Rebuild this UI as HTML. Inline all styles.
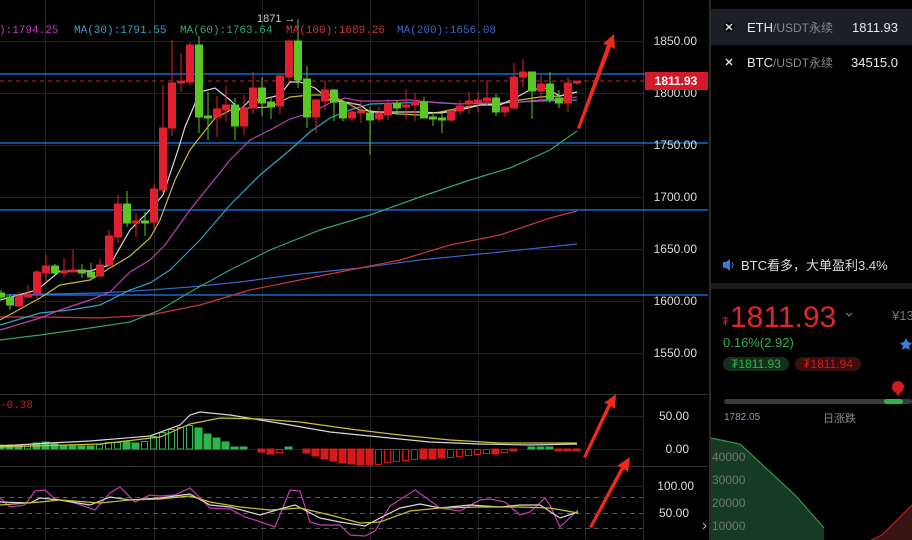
<!DOCTYPE html>
<html><head><meta charset="utf-8"><style>
html,body{margin:0;padding:0;background:#000;width:912px;height:540px;overflow:hidden}
svg{display:block}
.m{font-family:"Liberation Mono",monospace;font-size:11px}
.s{font-family:"Liberation Sans","Noto Sans CJK SC",sans-serif}
</style></head><body>
<svg width="912" height="540" xmlns="http://www.w3.org/2000/svg">
<rect width="912" height="540" fill="#000"/>
<!-- grid -->
<g stroke="#222" stroke-width="1">
<line x1="45.5" y1="0" x2="45.5" y2="540"/><line x1="154.5" y1="0" x2="154.5" y2="540"/><line x1="262.5" y1="0" x2="262.5" y2="540"/><line x1="370.5" y1="0" x2="370.5" y2="540"/><line x1="478.5" y1="0" x2="478.5" y2="540"/><line x1="585.5" y1="0" x2="585.5" y2="540"/>
<line x1="0" y1="41.5" x2="643" y2="41.5"/><line x1="0" y1="93.5" x2="643" y2="93.5"/><line x1="0" y1="145.5" x2="643" y2="145.5"/><line x1="0" y1="197.5" x2="643" y2="197.5"/><line x1="0" y1="249.5" x2="643" y2="249.5"/><line x1="0" y1="301.5" x2="643" y2="301.5"/><line x1="0" y1="353.5" x2="643" y2="353.5"/>
<line x1="0" y1="416.5" x2="643" y2="416.5"/><line x1="0" y1="449.5" x2="643" y2="449.5"/><line x1="0" y1="486.5" x2="643" y2="486.5"/>
</g>
<line x1="643.5" y1="0" x2="643.5" y2="540" stroke="#2a2a2a"/>
<line x1="0" y1="394.5" x2="708" y2="394.5" stroke="#333"/>
<line x1="0" y1="466.5" x2="708" y2="466.5" stroke="#333"/>
<!-- blue lines -->
<g stroke="#1e7bf0" stroke-width="1.3">
<line x1="0" y1="74" x2="708" y2="74"/><line x1="0" y1="143" x2="708" y2="143"/><line x1="0" y1="210" x2="708" y2="210"/><line x1="0" y1="295" x2="708" y2="295"/>
</g>
<line x1="0" y1="81" x2="645" y2="81" stroke="#d21f2a" stroke-dasharray="4,4"/>
<!-- MAs -->
<g fill="none" stroke-width="1.2">
<polyline stroke="#3a63c9" points="0,295 100,293 150,290 190,287 240,282 300,274 360,268 420,260 500,252 577,244"/>
<polyline stroke="#c8383a" points="0,317 45,317 100,318 150,315 200,305 250,290 300,280 350,270 400,260 450,245 500,235 550,218 577,211"/>
<polyline stroke="#2fa86a" points="0,340 40,335 90,328 130,322 160,310 190,292 230,270 270,250 320,230 370,215 420,197 470,180 510,168 550,150 577,131"/>
<polyline stroke="#2aa6c4" points="0,325 40,313 70,310 100,305 130,290 150,283 170,270 200,240 230,205 260,175 290,150 310,132 330,118 350,110 370,104 400,103 430,102 460,104 500,103 540,101 577,100"/>
<polyline stroke="#c23db5" points="0,330 40,318 60,310 90,300 110,292 130,272 150,260 165,245 190,210 210,185 230,160 250,140 270,130 290,119 310,113 330,103 345,98 360,101 380,101 410,100 440,103 460,104 480,103 500,103 520,102 540,100 560,99 577,97"/>
<polyline stroke="#c9b832" points="0,320 40,298 60,285 90,280 110,268 130,256 150,238 160,220 175,180 190,150 200,137 215,118 235,108 250,108 270,107 290,97 310,95 330,95 345,102 360,110 380,112 400,114 420,115 440,112 460,108 480,105 500,104 520,100 540,97 560,96 577,92"/>
<polyline stroke="#d8d8d8" points="0,300 37,290 60,271 90,271 110,265 130,230 150,210 163,195 178,150 185,127 200,92 215,88 230,100 240,110 250,100 260,100 280,95 290,82 300,82 315,88 330,100 345,102 360,105 370,112 380,112 400,112 420,112 440,113 460,110 480,105 500,105 515,98 530,90 545,88 560,96 577,92"/>
</g>
<!-- candles -->
<g stroke-width="1">
<g stroke="#5ac724" fill="#5ac724">
<line x1="1" y1="290" x2="1" y2="300"/><rect x="-2.5" y="293" width="7" height="4"/>
<line x1="10" y1="294" x2="10" y2="310"/><rect x="6.5" y="297" width="7" height="8"/>
<line x1="55" y1="264" x2="55" y2="275"/><rect x="51.5" y="266" width="7" height="7"/>
<line x1="82" y1="264" x2="82" y2="278"/><rect x="78.5" y="270" width="7" height="3"/>
<line x1="91" y1="263" x2="91" y2="280"/><rect x="87.5" y="272" width="7" height="5"/>
<line x1="127" y1="191" x2="127" y2="227"/><rect x="123.5" y="204" width="7" height="19"/>
<line x1="145" y1="212" x2="145" y2="236"/><rect x="141.5" y="221" width="7" height="2"/>
<line x1="199" y1="36" x2="199" y2="133"/><rect x="195.5" y="45" width="7" height="72"/>
<line x1="208" y1="92" x2="208" y2="140"/><rect x="204.5" y="116" width="7" height="2"/>
<line x1="235" y1="98" x2="235" y2="140"/><rect x="231.5" y="105" width="7" height="21"/>
<line x1="262" y1="77" x2="262" y2="116"/><rect x="258.5" y="88" width="7" height="15"/>
<line x1="271" y1="97" x2="271" y2="119"/><rect x="267.5" y="102" width="7" height="5"/>
<line x1="298" y1="19" x2="298" y2="88"/><rect x="294.5" y="41" width="7" height="39"/>
<line x1="307" y1="66" x2="307" y2="128"/><rect x="303.5" y="79" width="7" height="38"/>
<line x1="334" y1="89" x2="334" y2="121"/><rect x="330.5" y="90" width="7" height="12"/>
<line x1="343" y1="102" x2="343" y2="121"/><rect x="339.5" y="102" width="7" height="16"/>
<line x1="370" y1="107" x2="370" y2="155"/><rect x="366.5" y="113" width="7" height="7"/>
<line x1="397" y1="100" x2="397" y2="115"/><rect x="393.5" y="103" width="7" height="5"/>
<line x1="424" y1="97" x2="424" y2="118"/><rect x="420.5" y="102" width="7" height="16"/>
<line x1="433" y1="112" x2="433" y2="126"/><rect x="429.5" y="117" width="7" height="2"/>
<line x1="442" y1="113" x2="442" y2="133"/><rect x="438.5" y="118" width="7" height="2"/>
<line x1="496" y1="94" x2="496" y2="116"/><rect x="492.5" y="98" width="7" height="14"/>
<line x1="532" y1="72" x2="532" y2="119"/><rect x="528.5" y="72" width="7" height="19"/>
<line x1="550" y1="72" x2="550" y2="103"/><rect x="546.5" y="84" width="7" height="15"/>
<line x1="559" y1="90" x2="559" y2="108"/><rect x="555.5" y="98" width="7" height="5"/>
</g>
<g stroke="#e0202e" fill="#e0202e">
<line x1="19" y1="292" x2="19" y2="307"/><rect x="15.5" y="296" width="7" height="10"/>
<line x1="28" y1="285" x2="28" y2="298"/><rect x="24.5" y="294" width="7" height="3"/>
<line x1="37" y1="270" x2="37" y2="300"/><rect x="33.5" y="272" width="7" height="21"/>
<line x1="46" y1="255" x2="46" y2="281"/><rect x="42.5" y="266" width="7" height="7"/>
<line x1="64" y1="258" x2="64" y2="277"/><rect x="60.5" y="271" width="7" height="2"/>
<line x1="73" y1="250" x2="73" y2="272"/><rect x="69.5" y="270" width="7" height="2"/>
<line x1="100" y1="259" x2="100" y2="276"/><rect x="96.5" y="265" width="7" height="11"/>
<line x1="109" y1="230" x2="109" y2="266"/><rect x="105.5" y="236" width="7" height="29"/>
<line x1="118" y1="195" x2="118" y2="243"/><rect x="114.5" y="204" width="7" height="33"/>
<line x1="136" y1="213" x2="136" y2="237"/><rect x="132.5" y="221" width="7" height="2"/>
<line x1="154" y1="184" x2="154" y2="229"/><rect x="150.5" y="189" width="7" height="33"/>
<line x1="163" y1="85" x2="163" y2="193"/><rect x="159.5" y="128" width="7" height="62"/>
<line x1="172" y1="40" x2="172" y2="136"/><rect x="168.5" y="83" width="7" height="45"/>
<line x1="181" y1="53" x2="181" y2="92"/><rect x="177.5" y="81" width="7" height="2"/>
<line x1="190" y1="42" x2="190" y2="85"/><rect x="186.5" y="45" width="7" height="37"/>
<line x1="217" y1="96" x2="217" y2="137"/><rect x="213.5" y="109" width="7" height="8"/>
<line x1="226" y1="86" x2="226" y2="121"/><rect x="222.5" y="105" width="7" height="5"/>
<line x1="244" y1="95" x2="244" y2="135"/><rect x="240.5" y="108" width="7" height="18"/>
<line x1="253" y1="72" x2="253" y2="114"/><rect x="249.5" y="88" width="7" height="20"/>
<line x1="280" y1="74" x2="280" y2="114"/><rect x="276.5" y="76" width="7" height="30"/>
<line x1="289" y1="40" x2="289" y2="80"/><rect x="285.5" y="41" width="7" height="36"/>
<line x1="316" y1="99" x2="316" y2="133"/><rect x="312.5" y="100" width="7" height="17"/>
<line x1="325" y1="81" x2="325" y2="110"/><rect x="321.5" y="90" width="7" height="11"/>
<line x1="352" y1="103" x2="352" y2="121"/><rect x="348.5" y="112" width="7" height="6"/>
<line x1="361" y1="100" x2="361" y2="123"/><rect x="357.5" y="111" width="7" height="2"/>
<line x1="379" y1="107" x2="379" y2="122"/><rect x="375.5" y="113" width="7" height="6"/>
<line x1="388" y1="99" x2="388" y2="120"/><rect x="384.5" y="104" width="7" height="11"/>
<line x1="406" y1="89" x2="406" y2="119"/><rect x="402.5" y="105" width="7" height="2"/>
<line x1="415" y1="93" x2="415" y2="121"/><rect x="411.5" y="102" width="7" height="3"/>
<line x1="451" y1="110" x2="451" y2="122"/><rect x="447.5" y="111" width="7" height="9"/>
<line x1="460" y1="100" x2="460" y2="115"/><rect x="456.5" y="106" width="7" height="5"/>
<line x1="469" y1="92" x2="469" y2="114"/><rect x="465.5" y="101" width="7" height="3"/>
<line x1="478" y1="92" x2="478" y2="112"/><rect x="474.5" y="100" width="7" height="2"/>
<line x1="487" y1="80" x2="487" y2="106"/><rect x="483.5" y="98" width="7" height="3"/>
<line x1="505" y1="106" x2="505" y2="117"/><rect x="501.5" y="107" width="7" height="5"/>
<line x1="514" y1="63" x2="514" y2="110"/><rect x="510.5" y="77" width="7" height="31"/>
<line x1="523" y1="59" x2="523" y2="87"/><rect x="519.5" y="72" width="7" height="5"/>
<line x1="541" y1="75" x2="541" y2="101"/><rect x="537.5" y="84" width="7" height="7"/>
<line x1="568" y1="77" x2="568" y2="112"/><rect x="564.5" y="83" width="7" height="20"/>
<line x1="577" y1="81" x2="577" y2="85"/><rect x="573.5" y="81" width="7" height="2"/>
</g>
</g>
<!-- arrows -->
<g fill="#f02a1a">
<polygon points="577,128 607,45 603,44 614,34 615,49 611,47 580,129"/>
<polygon points="583,457 608,404 604,403 616,394 615,409 611,406 586,458"/>
<polygon points="589,527 621,467 617,466 630,457 628,472 624,469 592,528"/>
</g>
<!-- MACD histogram -->
<g fill="#2fb34a" stroke="#2fb34a">
<rect x="-3" y="445" width="7" height="4"/><rect x="6" y="445" width="7" height="4"/><rect x="15" y="445" width="7" height="4"/>
<rect x="24.5" y="444.5" width="6" height="4.5" fill="none"/><rect x="33" y="443" width="7" height="6"/><rect x="42" y="442" width="7" height="7"/><rect x="51" y="444" width="7" height="5"/><rect x="60" y="445" width="7" height="4"/><rect x="69" y="446" width="7" height="3"/><rect x="78" y="446" width="7" height="3"/><rect x="87" y="446" width="7" height="3"/>
<rect x="96.5" y="444.5" width="6" height="4.5" fill="none"/><rect x="105.5" y="442.5" width="6" height="6.5" fill="none"/><rect x="114.5" y="442.5" width="6" height="6.5" fill="none"/><rect x="123" y="442" width="7" height="7"/><rect x="132" y="443" width="7" height="6"/><rect x="141.5" y="441.5" width="6" height="7.5" fill="none"/><rect x="150.5" y="436.5" width="6" height="12.5" fill="none"/><rect x="159.5" y="432.5" width="6" height="16.5" fill="none"/><rect x="168.5" y="429.5" width="6" height="19.5" fill="none"/><rect x="177.5" y="427.5" width="6" height="21.5" fill="none"/><rect x="186.5" y="425.5" width="6" height="23.5" fill="none"/>
<rect x="195" y="428" width="7" height="21"/><rect x="204" y="434" width="7" height="15"/><rect x="213" y="438" width="7" height="11"/><rect x="222" y="442" width="7" height="7"/><rect x="231" y="447" width="7" height="2"/><rect x="240" y="447" width="7" height="2"/>
<rect x="285" y="447" width="7" height="2"/><rect x="528" y="447" width="7" height="2"/><rect x="537" y="447" width="7" height="2"/><rect x="546" y="447" width="7" height="2"/>
</g>
<g fill="#d41a1a" stroke="#d41a1a">
<rect x="258" y="449" width="7" height="3"/><rect x="267" y="449" width="7" height="5"/><rect x="276.5" y="449.5" width="6" height="3" fill="none"/>
<rect x="303" y="449" width="7" height="4"/><rect x="312" y="449" width="7" height="7"/><rect x="321" y="449" width="7" height="10"/><rect x="330" y="449" width="7" height="12"/><rect x="339" y="449" width="7" height="14"/><rect x="348" y="449" width="7" height="15"/><rect x="357" y="449" width="7" height="16"/><rect x="366" y="449" width="7" height="16"/>
<rect x="375.5" y="449.5" width="6" height="15" fill="none"/><rect x="384.5" y="449.5" width="6" height="13" fill="none"/><rect x="393.5" y="449.5" width="6" height="12" fill="none"/><rect x="402.5" y="449.5" width="6" height="11" fill="none"/><rect x="411.5" y="449.5" width="6" height="10" fill="none"/>
<rect x="420" y="449" width="7" height="10"/><rect x="429" y="449" width="7" height="10"/><rect x="438" y="449" width="7" height="9"/>
<rect x="447.5" y="449.5" width="6" height="8" fill="none"/><rect x="456.5" y="449.5" width="6" height="7" fill="none"/><rect x="465.5" y="449.5" width="6" height="6" fill="none"/><rect x="474.5" y="449.5" width="6" height="5" fill="none"/><rect x="483.5" y="449.5" width="6" height="4" fill="none"/>
<rect x="492" y="449" width="7" height="5"/><rect x="501.5" y="449.5" width="6" height="3" fill="none"/><rect x="510" y="449" width="7" height="2"/>
<rect x="555" y="449" width="7" height="2"/><rect x="564" y="449" width="7" height="2"/><rect x="573" y="449" width="7" height="2"/>
</g>
<g fill="none" stroke-width="1.2">
<polyline stroke="#d8d8d8" points="0,446 50,443 90,441 150,436 180,425 190,415 200,412 230,415 260,420 290,425 330,432 380,437 430,442 480,444 530,445 577,444"/>
<polyline stroke="#c9c032" points="0,447 100,444 160,437 190,424 220,418 260,419 300,422 350,429 400,435 450,440 500,443 577,443"/>
</g>
<!-- RSI -->
<g stroke="#555" stroke-dasharray="5,4">
<line x1="0" y1="497.5" x2="643" y2="497.5"/><line x1="0" y1="513.5" x2="643" y2="513.5"/><line x1="0" y1="528.5" x2="643" y2="528.5"/>
</g>
<g fill="none" stroke-width="1.2">
<polyline stroke="#c23db5" points="0,498 10,507 25,505 35,491 45,490 55,499 75,503 95,510 110,493 120,487 135,502 150,495 160,496 175,495 190,488 210,508 230,509 245,517 255,520 275,527 290,490 300,491 310,522 320,525 340,525 350,535 365,536 375,531 390,506 415,490 425,497 440,508 460,511 480,500 490,499 505,502 520,515 530,512 545,498 550,505 560,527 578,510"/>
<polyline stroke="#d8d8d8" points="0,502 30,503 40,498 60,500 90,505 110,497 130,500 160,498 190,494 210,505 230,507 260,515 280,509 295,505 320,518 340,522 365,526 380,518 400,508 420,504 440,508 470,505 500,507 520,505 540,505 560,518 578,512"/>
<polyline stroke="#c9c032" points="0,505 40,502 60,500 100,503 130,500 160,499 190,496 210,502 240,507 270,510 300,508 330,515 360,523 380,522 410,511 440,508 480,507 520,507 550,508 578,513"/>
</g>
<!-- legends -->
<text class="m" x="-1" y="33" fill="#c23db5">):1794.25</text>
<text class="m" x="74" y="33" fill="#2aa6c4">MA(30):1791.55</text>
<text class="m" x="180" y="33" fill="#2fa86a">MA(60):1763.64</text>
<text class="m" x="286" y="33" fill="#c8383a">MA(100):1689.26</text>
<text class="m" x="397" y="33" fill="#3a63c9">MA(200):1656.08</text>
<text class="s" x="257" y="22" font-size="11" fill="#ccc">1871 →</text>
<text class="m" x="0" y="408" fill="#d41a1a">-0.38</text>
<!-- axis labels -->
<g class="s" font-size="12" fill="#ddd" text-anchor="end">
<text x="697" y="45">1850.00</text><text x="697" y="97">1800.00</text><text x="697" y="149">1750.00</text><text x="697" y="201">1700.00</text><text x="697" y="253">1650.00</text><text x="697" y="305">1600.00</text><text x="697" y="357">1550.00</text>
<text x="689" y="420">50.00</text><text x="689" y="453">0.00</text>
<text x="694" y="490">100.00</text><text x="689" y="517">50.00</text>
</g>
<rect x="645" y="72" width="63" height="18" fill="#d21a2a"/>
<text class="s" x="676" y="85" font-size="12" fill="#fff" text-anchor="middle" font-weight="bold">1811.93</text>
<!-- right panel -->
<rect x="709" y="0" width="2" height="540" fill="#2a2a2a"/>
<rect x="711" y="9" width="201" height="36" fill="#1d1f26"/>
<circle cx="729" cy="27" r="5" fill="#000"/>
<g stroke="#ddd" stroke-width="1.5"><line x1="726" y1="24" x2="732" y2="30"/><line x1="732" y1="24" x2="726" y2="30"/></g>
<g stroke="#ddd" stroke-width="1.5"><line x1="726" y1="59" x2="732" y2="65"/><line x1="732" y1="59" x2="726" y2="65"/></g>
<text class="s" x="747" y="32" font-size="13" fill="#e8e8e8">ETH<tspan fill="#888" font-size="12">/USDT永续</tspan></text>
<text class="s" x="898" y="32" font-size="13" fill="#e8e8e8" text-anchor="end">1811.93</text>
<text class="s" x="747" y="67" font-size="13" fill="#e8e8e8">BTC<tspan fill="#888" font-size="12">/USDT永续</tspan></text>
<text class="s" x="898" y="67" font-size="13" fill="#e8e8e8" text-anchor="end">34515.0</text>
<path d="M723,262 h3 l4,-3 v12 l-4,-3 h-3z" fill="#3a7ad8"/>
<path d="M732,262 q2,3 0,6" stroke="#3a7ad8" fill="none"/>
<text class="s" x="741" y="270" font-size="13" fill="#ddd">BTC看多，大单盈利3.4%</text>
<rect x="711" y="283" width="201" height="6" fill="#1c1c1c"/>
<text class="s" x="722" y="325" font-size="11" fill="#e0252b">₮</text>
<text class="s" x="730" y="327" font-size="30" fill="#e0252b">1811.93</text>
<path d="M846,313 l3,3 l3,-3" stroke="#888" fill="none"/>
<text class="s" x="892" y="320" font-size="13" fill="#777">¥13</text>
<text class="s" x="723" y="347" font-size="13" fill="#2fb34a">0.16%(2.92)</text>
<polygon points="906,338 908,342 912,343 909,346 910,350 906,348 902,350 903,346 900,343 904,342" fill="#3a7ad8"/>
<rect x="723" y="357" width="66" height="14" rx="7" fill="#12301c"/>
<text class="s" x="756" y="368" font-size="12" fill="#2fb34a" text-anchor="middle">₮1811.93</text>
<rect x="795" y="357" width="66" height="14" rx="7" fill="#3a0e0e"/>
<text class="s" x="828" y="368" font-size="12" fill="#d41a1a" text-anchor="middle">₮1811.94</text>
<circle cx="898" cy="387" r="6" fill="#d41a1a"/><polygon points="893,389 903,389 898,396" fill="#d41a1a"/>
<rect x="724" y="399" width="188" height="5" rx="2.5" fill="#3a3a3a"/>
<rect x="884" y="399" width="19" height="5" rx="2.5" fill="#2fb34a"/>
<text class="s" x="724" y="420" font-size="10" fill="#8a9aaa">1782.05</text>
<text class="s" x="823" y="422" font-size="11" fill="#888">日涨跌</text>
<polygon points="711,438 740,444 796,496 824,528 824,540 711,540" fill="#163a24"/>
<polyline points="711,438 740,444 796,496 824,528" fill="none" stroke="#2c9a4a" stroke-width="1.2"/>
<polygon points="871,540 882,535 912,505 912,540" fill="#3a1313"/>
<polyline points="871,540 882,535 912,505" fill="none" stroke="#b02020" stroke-width="1.2"/>
<g class="s" font-size="12" fill="#6a7a70">
<text x="712" y="461">40000</text><text x="712" y="484">30000</text><text x="712" y="507">20000</text><text x="712" y="530">10000</text>
</g>
<path d="M703,523 l3,3 l-3,3" stroke="#bbb" fill="none"/>
</svg>
</body></html>
